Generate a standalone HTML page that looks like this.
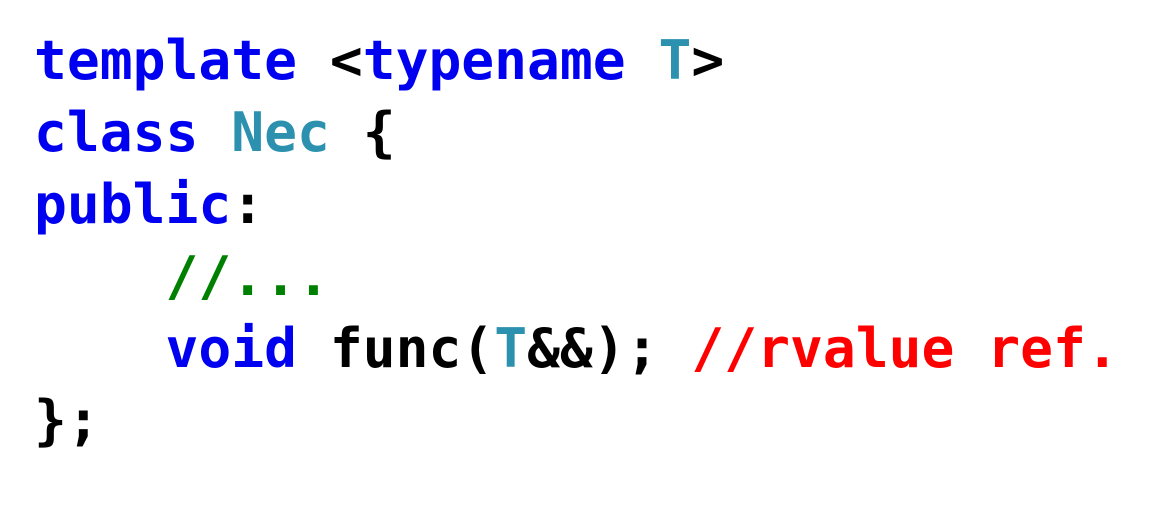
<!DOCTYPE html>
<html><head><style>
html,body{margin:0;padding:0;background:#fff;width:1151px;height:518px;overflow:hidden}
pre{position:absolute;left:34px;top:24px;margin:0;font-family:"DejaVu Sans Mono","Liberation Mono",monospace;font-weight:bold;font-size:54.6px;line-height:72px;color:#000}
.k{color:#0000f0}.t{color:#2b91af}.g{color:#008000}.r{color:#f00}
</style></head><body>
<pre><span class="k">template</span> &lt;<span class="k">typename</span> <span class="t">T</span>&gt;
<span class="k">class</span> <span class="t">Nec</span> {
<span class="k">public</span>:
    <span class="g">//...</span>
    <span class="k">void</span> func(<span class="t">T</span>&amp;&amp;); <span class="r">//rvalue ref.</span>
};</pre>
</body></html>
